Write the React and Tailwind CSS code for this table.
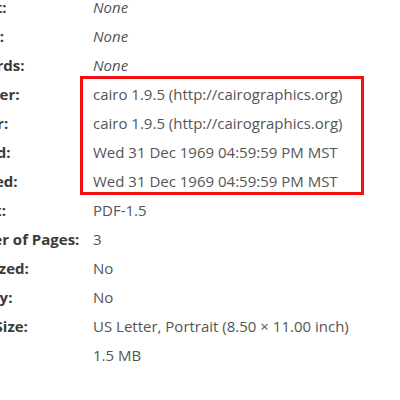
import React from 'react';

const rows = [
  { label: 'Subject:', value: 'None', italic: true },
  { label: 'Author:', value: 'None', italic: true },
  { label: 'Keywords:', value: 'None', italic: true },
  { label: 'Producer:', value: 'cairo 1.9.5 (http://cairographics.org)', boxed: true },
  { label: 'Creator:', value: 'cairo 1.9.5 (http://cairographics.org)', boxed: true },
  { label: 'Created:', value: 'Wed 31 Dec 1969 04:59:59 PM MST', boxed: true },
  { label: 'Modified:', value: 'Wed 31 Dec 1969 04:59:59 PM MST', boxed: true },
  { label: 'Format:', value: 'PDF-1.5' },
  { label: 'Number of Pages:', value: '3' },
  { label: 'Optimized:', value: 'No' },
  { label: 'Security:', value: 'No' },
  { label: 'Paper Size:', value: 'US Letter, Portrait (8.50 × 11.00 inch)' },
  { label: 'Size:', value: '1.5 MB' },
];

const Row = ({ row }) => (
  <div className="flex h-[29px] items-center">
    <div className="w-[146px] shrink-0 font-bold text-[#3a3a3a]">{row.label}</div>
    <div className={`${row.italic ? 'italic' : ''} whitespace-nowrap text-[#555]`}>{row.value}</div>
  </div>
);

const App = () => {
  const top = rows.slice(0, 3);
  const boxed = rows.slice(3, 7);
  const rest = rows.slice(7);

  return (
    <div
      className="w-[400px] h-[400px] overflow-hidden bg-white text-[15px]"
      style={{ fontFamily: '"Open Sans", "Noto Sans", sans-serif' }}
    >
      <div className="-ml-[53px] -mt-[7px]">
        {top.map((r) => <Row key={r.label} row={r} />)}
        <div className="relative">
          {boxed.map((r) => <Row key={r.label} row={r} />)}
          <div className="absolute left-[133px] top-[-4px] w-[284px] h-[119px] border-[3px] border-[#ee1111]"></div>
        </div>
        {rest.map((r) => <Row key={r.label} row={r} />)}
      </div>
    </div>
  );
};

export default App;
